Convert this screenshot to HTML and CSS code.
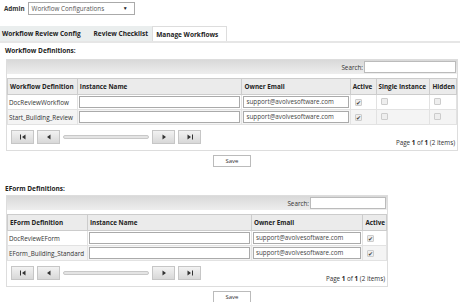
FILE: index.html
```html
<!DOCTYPE html>
<html lang="en">
<head>
    <meta charset="UTF-8">
    <title>Workflow Configurations</title>
    <link rel="stylesheet" href="styles.css">
</head>
<body>
    <div class="topbar">
        <span class="label">Admin</span>
        <div class="select">Workflow Configurations<span class="arrow">&#9660;</span></div>
    </div>

    <div class="tabs">
        <div class="tab">Workflow Review Config</div>
        <div class="tab">Review Checklist</div>
        <div class="tab active">Manage Workflows</div>
    </div>

    <div class="panel">
        <h2 class="section-title">Workflow Definitions:</h2>
        <div class="grid grid-wide">
            <div class="toolbar">
                <span>Search:</span>
                <div class="search"></div>
            </div>
            <table>
                <tr>
                    <th class="c-def">Workflow Definition</th>
                    <th class="c-inst">Instance Name</th>
                    <th class="c-mail">Owner Email</th>
                    <th class="c-act">Active</th>
                    <th class="c-single">Single Instance</th>
                    <th class="c-hidden">Hidden</th>
                </tr>
                <tr>
                    <td>DocReviewWorkflow</td>
                    <td><div class="field"></div></td>
                    <td><div class="field">support@avolvesoftware.com</div></td>
                    <td><span class="chk on">&#10004;</span></td>
                    <td><span class="chk"></span></td>
                    <td><span class="chk"></span></td>
                </tr>
                <tr class="alt">
                    <td>Start_Building_Review</td>
                    <td><div class="field"></div></td>
                    <td><div class="field">support@avolvesoftware.com</div></td>
                    <td><span class="chk on">&#10004;</span></td>
                    <td><span class="chk"></span></td>
                    <td><span class="chk"></span></td>
                </tr>
            </table>
            <div class="pager">
                <div class="nav">
                    <span class="btn"><svg width="8" height="6" viewBox="0 0 8 6"><rect x="1" y="0.5" width="1" height="5" fill="#333"/><path d="M6.5 0.5 L3 3 L6.5 5.5 Z" fill="#333"/></svg></span>
                    <span class="btn"><svg width="8" height="6" viewBox="0 0 8 6"><path d="M5.5 0.5 L2 3 L5.5 5.5 Z" fill="#333"/></svg></span>
                    <span class="slider"></span>
                    <span class="btn"><svg width="8" height="6" viewBox="0 0 8 6"><path d="M2.5 0.5 L6 3 L2.5 5.5 Z" fill="#333"/></svg></span>
                    <span class="btn"><svg width="8" height="6" viewBox="0 0 8 6"><path d="M1.5 0.5 L5 3 L1.5 5.5 Z" fill="#333"/><rect x="6" y="0.5" width="1" height="5" fill="#333"/></svg></span>
                </div>
                <div class="info">Page <b>1</b> of <b>1</b> (2 items)</div>
            </div>
        </div>
        <div class="actions"><button class="save">Save</button></div>

        <h2 class="section-title second">EForm Definitions:</h2>
        <div class="grid grid-narrow">
            <div class="toolbar">
                <span>Search:</span>
                <div class="search short"></div>
            </div>
            <table>
                <tr>
                    <th class="e-def">EForm Definition</th>
                    <th class="e-inst">Instance Name</th>
                    <th class="e-mail">Owner Email</th>
                    <th class="e-act">Active</th>
                </tr>
                <tr>
                    <td>DocReviewEForm</td>
                    <td><div class="field"></div></td>
                    <td><div class="field">support@avolvesoftware.com</div></td>
                    <td><span class="chk on">&#10004;</span></td>
                </tr>
                <tr class="alt">
                    <td>EForm_Building_Standard</td>
                    <td><div class="field"></div></td>
                    <td><div class="field">support@avolvesoftware.com</div></td>
                    <td><span class="chk on">&#10004;</span></td>
                </tr>
            </table>
            <div class="pager">
                <div class="nav">
                    <span class="btn"><svg width="8" height="6" viewBox="0 0 8 6"><rect x="1" y="0.5" width="1" height="5" fill="#333"/><path d="M6.5 0.5 L3 3 L6.5 5.5 Z" fill="#333"/></svg></span>
                    <span class="btn"><svg width="8" height="6" viewBox="0 0 8 6"><path d="M5.5 0.5 L2 3 L5.5 5.5 Z" fill="#333"/></svg></span>
                    <span class="slider"></span>
                    <span class="btn"><svg width="8" height="6" viewBox="0 0 8 6"><path d="M2.5 0.5 L6 3 L2.5 5.5 Z" fill="#333"/></svg></span>
                    <span class="btn"><svg width="8" height="6" viewBox="0 0 8 6"><path d="M1.5 0.5 L5 3 L1.5 5.5 Z" fill="#333"/><rect x="6" y="0.5" width="1" height="5" fill="#333"/></svg></span>
                </div>
                <div class="info">Page <b>1</b> of <b>1</b> (2 items)</div>
            </div>
        </div>
        <div class="actions"><button class="save">Save</button></div>
    </div>
</body>
</html>
```

FILE: styles.css
```css
body {
    margin: 0;
    font-family: "Open Sans", "Noto Sans", sans-serif;
    font-size: 6.3px;
    color: #333;
    background: #fff;
}

/* Top bar */
.topbar {
    display: flex;
    align-items: center;
    gap: 3px;
    padding: 1px 4px;
    height: 14px;
}

.label {
    font-weight: bold;
}

.select {
    display: flex;
    justify-content: space-between;
    align-items: center;
    width: 96px;
    height: 11px;
    padding: 0 6px 0 3px;
    border: 1px solid #aaa;
    color: #555;
}

.arrow {
    font-size: 5px;
    color: #222;
}

/* Tabs */
.tabs {
    display: flex;
    margin-top: 10px;
    border-bottom: 2px solid #e6e6e6;
    height: 15px;
}

.tab {
    display: flex;
    align-items: center;
    padding: 0 4px 0 3px;
    background: #eaeeee;
    font-weight: bold;
    font-size: 6.5px;
    color: #222;
}

.tab:first-child {
    padding-left: 2px;
    padding-right: 10px;
}

.tab.active {
    background: #fff;
    border: 1px solid #ddd;
    border-bottom: none;
    padding: 0 8px 0 3px;
}

/* Sections */
.panel {
    padding: 0 2px 0 6px;
}

.section-title {
    font-size: 6.5px;
    font-weight: bold;
    margin: 3px 0 4px -1px;
    color: #222;
}

.section-title.second {
    margin-top: 17px;
    margin-bottom: 2px;
}

.grid {
    border: 1px solid #ddd;
}

.grid-wide {
    width: 450px;
}

.grid-narrow {
    width: 380px;
}

.toolbar {
    display: flex;
    justify-content: flex-end;
    align-items: center;
    gap: 1px;
    height: 14px;
    padding-right: 1px;
    background: linear-gradient(#d9d9d9, #eeeeee);
    margin-bottom: 4px;
}

.search {
    width: 90px;
    height: 10px;
    border: 1px solid #bbb;
    background: #fff;
}

.search.short {
    width: 74px;
}

table {
    width: 100%;
    border-collapse: collapse;
}

th {
    text-align: left;
    font-weight: bold;
    height: 15px;
    padding: 0 1px 0 2px;
    background: #ebebeb;
    border: 1px solid #ccc;
    color: #222;
    white-space: nowrap;
}

td {
    height: 14px;
    padding: 0 1px;
    border: 1px solid #e2e2e2;
    white-space: nowrap;
}

tr.alt td {
    background: #f4f4f4;
}

.c-def { width: 66px; }
.c-inst { width: 168px; }
.c-mail { width: 105px; }
.c-act { width: 22px; }
.c-single { width: 50px; }

.e-def { width: 76px; }
.e-inst { width: 164px; }
.e-mail { width: 108px; }

.field {
    height: 10px;
    line-height: 10px;
    padding: 0 2px;
    border: 1px solid #aaa;
    background: #fff;
    color: #444;
}

.chk {
    display: inline-flex;
    justify-content: center;
    align-items: center;
    width: 5px;
    height: 5px;
    margin-left: 3px;
    border: 1px solid #ccc;
    border-radius: 1px;
    background: #eee;
    font-size: 6px;
    line-height: 1;
    color: #444;
}

/* Pager */
.pager {
    display: flex;
    justify-content: space-between;
    align-items: flex-end;
    height: 21px;
    padding: 1px 2px 3px 4px;
}

.nav {
    display: flex;
    align-items: center;
    gap: 3px;
    align-self: center;
}

.btn {
    display: flex;
    justify-content: center;
    align-items: center;
    width: 21px;
    height: 12px;
    border: 1px solid #c6c6c6;
    background: linear-gradient(#f2f2f2, #d8d8d8);
}

.slider {
    width: 84px;
    height: 2px;
    border: 1px solid #c8c8c8;
    border-radius: 2px;
    background: #e4e4e4;
}

.info b {
    color: #222;
}

.actions {
    display: flex;
    justify-content: center;
    padding-top: 4px;
}

.save {
    width: 38px;
    height: 12px;
    padding: 0;
    font-family: inherit;
    font-size: 6px;
    color: #333;
    border: 1px solid #bbb;
    background: #fff;
}
```
